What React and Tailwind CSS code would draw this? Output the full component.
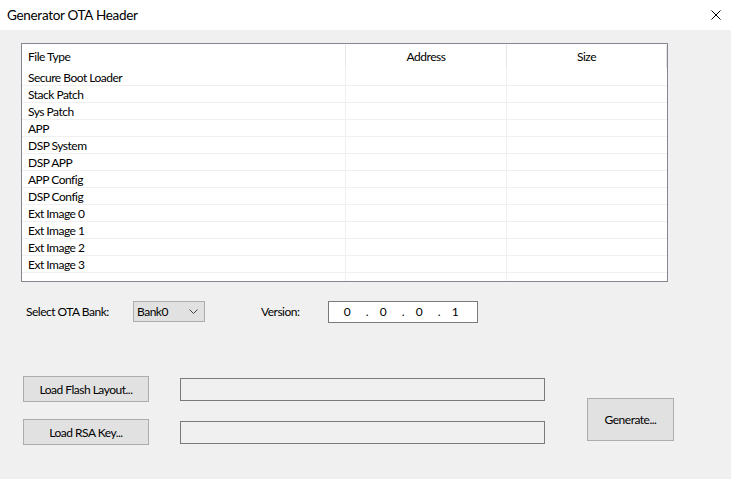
const FILE_TYPES = [
  "Secure Boot Loader",
  "Stack Patch",
  "Sys Patch",
  "APP",
  "DSP System",
  "DSP APP",
  "APP Config",
  "DSP Config",
  "Ext Image 0",
  "Ext Image 1",
  "Ext Image 2",
  "Ext Image 3",
  "",
];

const VERSION = ["0", "0", "0", "1"];

function WinButton({ children, className }) {
  return (
    <button
      type="button"
      className={`flex items-center justify-center border border-[#adadad] bg-[#e1e1e1] pt-[1px] text-[12px] tracking-[-0.5px] text-black ${className}`}
    >
      {children}
    </button>
  );
}

export default function App() {
  return (
    <div className="flex h-[479px] w-[731px] flex-col bg-[#f0f0f0] font-['Lato',sans-serif] text-[12px] tracking-[-0.5px] text-black">
      {/* title bar */}
      <div className="flex h-[30px] shrink-0 items-center justify-between bg-white pl-[7px] pr-[9px]">
        <span className="pt-[1px] text-[13.5px] tracking-[-0.3px]">Generator OTA Header</span>
        <svg width="10" height="10" viewBox="0 0 10 10" className="mr-[1px]">
          <path d="M0.5 0.5 L9.5 9.5 M9.5 0.5 L0.5 9.5" stroke="#000" strokeWidth="1" fill="none" />
        </svg>
      </div>

      <div className="flex flex-col pl-[21px] pt-[13px]">
        {/* file table */}
        <div className="h-[239px] w-[647px] overflow-hidden border border-[#828790] bg-white">
          <div className="flex h-[25px] items-center">
            <div className="w-[323px] pl-[6px] pt-[1px]">File Type</div>
            <div className="flex h-[23px] w-[161px] items-center justify-center border-l border-[#e5e5e5] pt-[1px]">Address</div>
            <div className="flex h-[23px] w-[161px] items-center justify-center border-x border-[#e5e5e5] pt-[1px]">Size</div>
          </div>
          {FILE_TYPES.map((name, i) => (
            <div key={i} className="flex h-[17px] border-b border-[#f0f0f0]">
              <div className="flex w-[323px] items-center pl-[6px] pt-[1px] leading-none">{name}</div>
              <div className="w-[161px] border-l border-[#f0f0f0]" />
              <div className="w-[161px] border-l border-[#f0f0f0]" />
            </div>
          ))}
        </div>

        {/* bank + version */}
        <div className="mt-[18px] flex h-[22px] items-center pt-[1px]">
          <span className="ml-[5px] w-[107px]">Select OTA Bank:</span>
          <div className="flex h-[21px] w-[72px] items-center justify-between border border-[#adadad] bg-[#e1e1e1] pl-[3px] pr-[6px]">
            <span>Bank0</span>
            <svg width="9" height="6" viewBox="0 0 9 6">
              <path d="M0.5 0.5 L4.5 4.5 L8.5 0.5" stroke="#444" strokeWidth="1" fill="none" />
            </svg>
          </div>
          <span className="ml-[56px] w-[67px]">Version:</span>
          <div className="flex h-[22px] w-[150px] items-center border border-[#7a7a7a] bg-white pl-[13px]">
            {VERSION.map((v, i) => (
              <div key={i} className="flex">
                <span className={`w-[10px] text-center ${i > 0 ? "ml-[6px]" : ""}`}>{v}</span>
                {i < VERSION.length - 1 && <span className="ml-[10px] w-[10px] text-center">.</span>}
              </div>
            ))}
          </div>
        </div>

        {/* loaders + generate */}
        <div className="mt-[54px] flex pl-[2px]">
          <div className="flex flex-col gap-[17px]">
            <div className="flex items-center">
              <WinButton className="h-[26px] w-[126px]">Load Flash Layout...</WinButton>
              <div className="ml-[31px] h-[23px] w-[365px] border border-[#7a7a7a] bg-[#f0f0f0]" />
            </div>
            <div className="flex items-center">
              <WinButton className="h-[26px] w-[126px]">Load RSA Key...</WinButton>
              <div className="ml-[31px] h-[23px] w-[365px] border border-[#7a7a7a] bg-[#f0f0f0]" />
            </div>
          </div>
          <WinButton className="ml-[42px] mt-[22px] h-[43px] w-[87px]">Generate...</WinButton>
        </div>
      </div>
    </div>
  );
}
